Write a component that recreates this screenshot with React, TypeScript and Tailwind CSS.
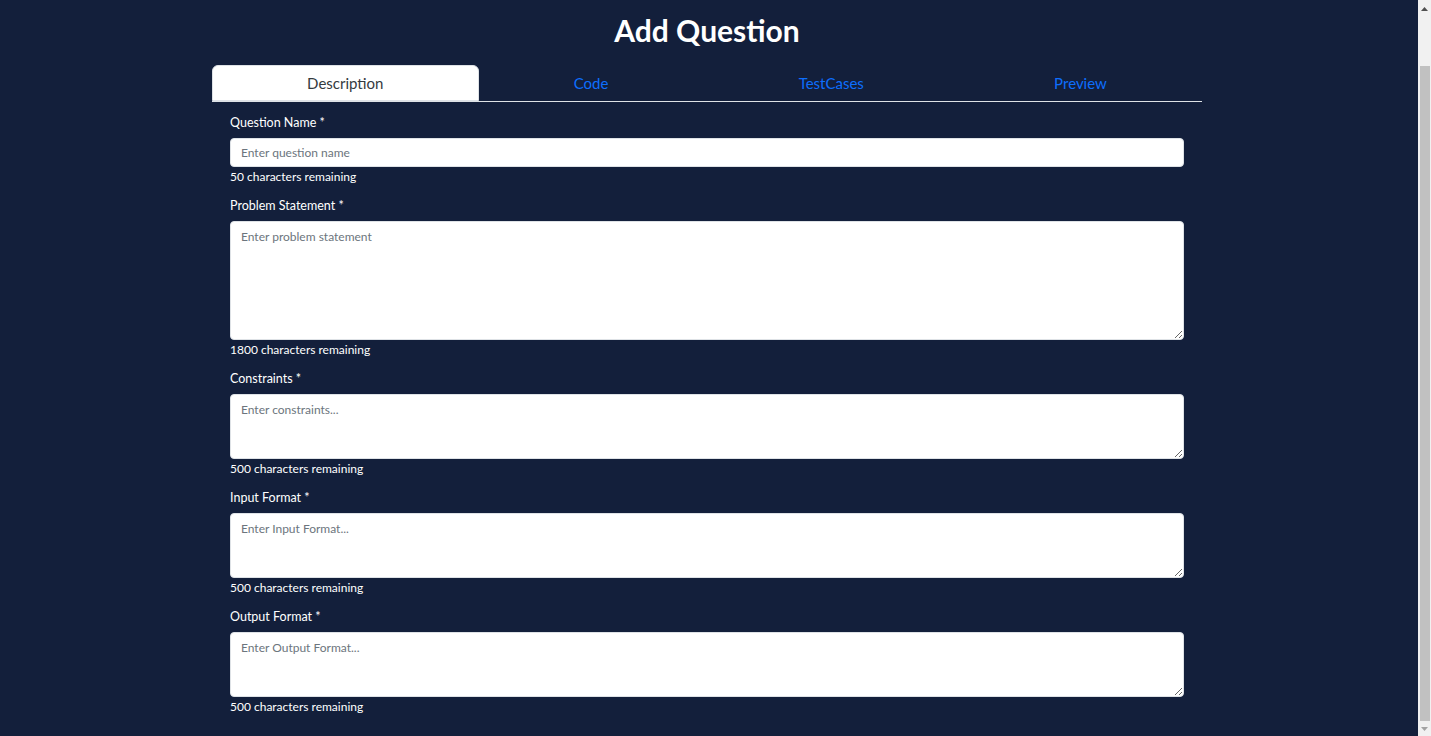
import { useState } from "react";

const tabs = ["Description", "Code", "TestCases", "Preview"];

// field config: label, placeholder, limit, height of the box
const fields = [
  { label: "Question Name *", placeholder: "Enter question name", max: 50, h: "h-[29px]", input: true },
  { label: "Problem Statement *", placeholder: "Enter problem statement", max: 1800, h: "h-[119px]" },
  { label: "Constraints *", placeholder: "Enter constraints...", max: 500, h: "h-[65px]" },
  { label: "Input Format *", placeholder: "Enter Input Format...", max: 500, h: "h-[65px]" },
  { label: "Output Format *", placeholder: "Enter Output Format...", max: 500, h: "h-[65px]" },
];

function Field({ f }: { f: (typeof fields)[number] }) {
  const [value, setValue] = useState("");
  const boxClass = `block w-full ${f.h} rounded-[4px] border border-[#dee2e6] bg-white px-[10px] text-[12px] text-[#212529] placeholder:text-[#6c757d] outline-none`;

  return (
    <div className="mb-[10px]">
      <label className="block mb-[6px] text-[12.5px] leading-[18px] text-white">
        {f.label}
      </label>
      {f.input ? (
        <input
          className={boxClass}
          placeholder={f.placeholder}
          value={value}
          maxLength={f.max}
          onChange={(e) => setValue(e.target.value)}
        />
      ) : (
        <textarea
          className={`${boxClass} py-[6px] leading-[18px] resize-y`}
          placeholder={f.placeholder}
          value={value}
          maxLength={f.max}
          onChange={(e) => setValue(e.target.value)}
        />
      )}
      <p className="text-[12px] leading-[20px] text-white">
        {f.max - value.length} characters remaining
      </p>
    </div>
  );
}

// window scrollbar as seen in the reference
function Scrollbar() {
  return (
    <div className="w-[13px] h-screen shrink-0 flex flex-col bg-[#f1f1f1]">
      <div className="h-[17px] flex items-center justify-center">
        <svg width="7" height="4" viewBox="0 0 7 4">
          <path d="M3.5 0 L7 4 L0 4 Z" fill="#505050" />
        </svg>
      </div>
      <div className="flex-1 flex flex-col pl-[2px] pr-[1px]">
        <div className="h-[49px]" />
        <div className="flex-1 bg-[#c1c1c1]" />
      </div>
      <div className="h-[15px] flex items-center justify-center">
        <svg width="7" height="4" viewBox="0 0 7 4">
          <path d="M0 0 L7 0 L3.5 4 Z" fill="#a3a3a3" />
        </svg>
      </div>
    </div>
  );
}

export default function App() {
  const [active, setActive] = useState(0);

  return (
    <div
      className="flex h-screen bg-[#131f3b]"
      style={{ fontFamily: 'Lato, "Open Sans", sans-serif' }}
    >
      <div className="flex-1 min-w-0 pr-[4px]">
        <h1 className="pt-[12px] mb-[17px] text-center text-[30px] leading-[36px] font-bold text-white">
          Add Question
        </h1>

        <div className="w-[990px] mx-auto">
          {/* Tabs */}
          <div className="flex border-b border-[#dee2e6]">
            {tabs.map((t, i) => (
              <button
                key={t}
                onClick={() => setActive(i)}
                className={
                  i === active
                    ? "flex-auto h-[36px] -mb-px px-4 text-[15px] text-[#343a40] bg-white border border-[#dee2e6] rounded-t-[6px]"
                    : "flex-auto h-[36px] px-4 text-[15px] text-[#0d6efd] border border-transparent"
                }
              >
                {t}
              </button>
            ))}
          </div>

          {/* Form */}
          <div className="px-[18px] pt-[12px]">
            {fields.map((f) => (
              <Field key={f.label} f={f} />
            ))}
          </div>
        </div>
      </div>
      <Scrollbar />
    </div>
  );
}
